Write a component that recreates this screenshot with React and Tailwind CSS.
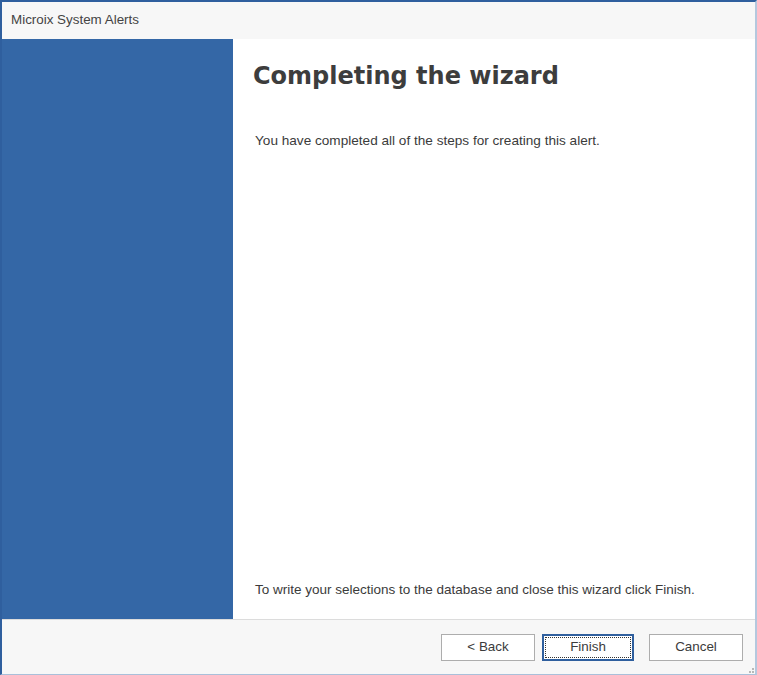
export default function App() {
  const font = { fontFamily: '"Liberation Sans", Arial, sans-serif' }

  return (
    <div
      className="w-[757px] h-[675px] flex flex-col bg-white border-l-2 border-l-[#2f5f9e] border-r-2 border-r-[#b4c8de] border-b border-b-[#a9c0da] border-t-2 border-t-[#2f5f9e] text-[#3b3b3b]"
      style={font}
    >
      <div className="h-[37px] shrink-0 bg-[#f7f7f7] flex items-center pl-[9px] text-[13.4px] text-[#444]">
        Microix System Alerts
      </div>

      <div className="flex flex-1 min-h-0">
        <div className="w-[231px] shrink-0 bg-[#3467a6]" />
        <div className="flex-1 flex flex-col pl-[20px] pt-[21px] pb-[21px]">
          <h1
            className="text-[24px] font-bold text-[#3d3d3d] leading-[32px]"
            style={{ fontFamily: '"DejaVu Sans", Verdana, sans-serif' }}
          >
            Completing the wizard
          </h1>
          <p className="mt-[40px] ml-[2px] text-[13.6px] leading-[17px] text-[#3b3b3b]">
            You have completed all of the steps for creating this alert.
          </p>
          <p className="mt-auto ml-[2px] text-[13.5px] leading-[17px] text-[#3b3b3b]">
            To write your selections to the database and close this wizard click Finish.
          </p>
        </div>
      </div>

      <div className="h-[55px] shrink-0 bg-[#f7f7f7] border-t border-[#dcdcdc] flex items-center justify-end gap-[7px] pr-[12px] pt-[1px] text-[13.4px] text-[#3b3b3b] relative">
        <button className="w-[94px] h-[27px] bg-white border border-[#adadad]">
          &lt; Back
        </button>
        <button className="w-[92px] h-[27px] bg-white border-2 border-[#2f5f9e] p-[1px]">
          <span className="flex items-center justify-center w-full h-full border border-dotted border-[#333]">
            Finish
          </span>
        </button>
        <button className="w-[94px] h-[27px] ml-[8px] bg-white border border-[#adadad]">
          Cancel
        </button>
        <div className="absolute right-[1px] bottom-[1px] grid grid-cols-3 gap-[1px]">
          <span />
          <span />
          <span className="w-[2px] h-[2px] bg-[#b8b8b8]" />
          <span />
          <span className="w-[2px] h-[2px] bg-[#b8b8b8]" />
          <span className="w-[2px] h-[2px] bg-[#b8b8b8]" />
        </div>
      </div>
    </div>
  )
}
